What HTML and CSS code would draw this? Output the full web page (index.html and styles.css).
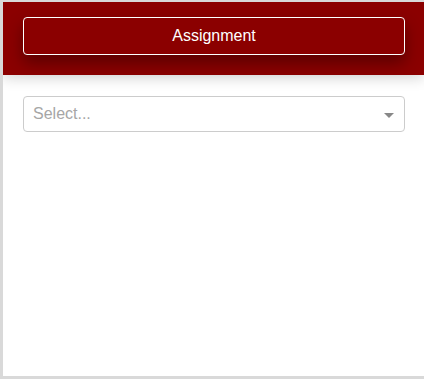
FILE: index.html
```html
<!DOCTYPE html>
<html>
<head>
<meta charset="utf-8">
<link rel="stylesheet" href="styles.css">
</head>
<body>
<div class="panel">
  <div class="header">
    <button class="assign-btn">Assignment</button>
  </div>
  <div class="content">
    <div class="select">
      <span class="placeholder">Select...</span>
      <span class="caret"></span>
    </div>
  </div>
</div>
</body>
</html>
```
FILE: styles.css
```css
html, body {
  margin: 0;
  padding: 0;
  background: #d9d9d9;
  font-family: "Liberation Sans", Arial, sans-serif;
}
.panel {
  margin: 2px 0 0 3px;
  height: 374px;
  background: #fff;
  overflow: hidden;
}
.header {
  background: #8b0000;
  padding: 15px 19px 20px 20px;
  box-shadow: 0 4px 12px rgba(0, 0, 0, 0.15);
  position: relative;
}
.assign-btn {
  display: block;
  width: 100%;
  height: 38px;
  background: #8b0000;
  border: 1px solid #fff;
  border-radius: 4px;
  color: #fff;
  font-family: "Liberation Sans", Arial, sans-serif;
  font-size: 16px;
  cursor: pointer;
  box-shadow: 0 8px 16px rgba(0, 0, 0, 0.35);
}
.content {
  padding: 21px 19px 0 20px;
}
.select {
  height: 36px;
  box-sizing: border-box;
  border: 1px solid #ccc;
  border-radius: 4px;
  display: flex;
  align-items: center;
  justify-content: space-between;
  padding: 0 10px 0 9px;
}
.placeholder {
  color: #a6a6a6;
  font-size: 16px;
}
.caret {
  width: 0;
  height: 0;
  border-left: 5px solid transparent;
  border-right: 5px solid transparent;
  border-top: 5px solid #888;
  margin-top: 2px;
}
```
